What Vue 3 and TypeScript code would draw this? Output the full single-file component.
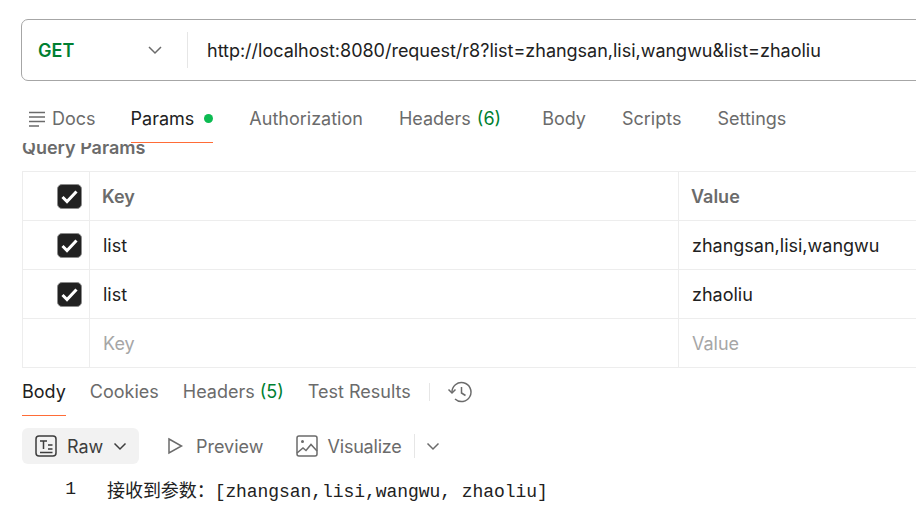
<script setup lang="ts">
const requestTabs = [
  { label: 'Authorization' },
  { label: 'Headers', count: '(6)' },
  { label: 'Body' },
  { label: 'Scripts' },
  { label: 'Settings' }
]

const params = [
  { key: 'list', value: 'zhangsan,lisi,wangwu' },
  { key: 'list', value: 'zhaoliu' }
]
</script>

<template>
  <div class="page">
    <div class="url-bar">
      <div class="method">
        <span>GET</span>
        <svg class="chevron" width="16" height="16" viewBox="0 0 16 16">
          <path d="M2 5l6 6 6-6" />
        </svg>
      </div>
      <div class="url">http://localhost:8080/request/r8?list=zhangsan,lisi,wangwu&amp;list=zhaoliu</div>
    </div>

    <div class="request-tabs">
      <div class="tab docs">
        <svg width="18" height="18" viewBox="0 0 18 18">
          <path d="M0 2.500h16M0 7h16M0 11.500h16M0 16h10" />
        </svg>
        Docs
      </div>
      <div class="tab params">
        Params
        <i class="dot"></i>
      </div>
      <div v-for="t in requestTabs" :key="t.label" class="tab" :class="`tab-${t.label.toLowerCase()}`">
        {{ t.label }}
        <span v-if="t.count" class="count">{{ t.count }}</span>
      </div>
    </div>

    <div class="params-pane">
      <div class="query-title">Query Params</div>
      <div class="table">
        <div class="row head">
          <div class="check">
            <span class="box"><svg viewBox="0 0 19 19"><path d="M2.500 10l4.500 4.500 9.500-10" /></svg></span>
          </div>
          <div class="cell key">Key</div>
          <div class="cell">Value</div>
        </div>
        <div v-for="(p, i) in params" :key="i" class="row">
          <div class="check">
            <span class="box"><svg viewBox="0 0 19 19"><path d="M2.500 10l4.500 4.500 9.500-10" /></svg></span>
          </div>
          <div class="cell key">{{ p.key }}</div>
          <div class="cell">{{ p.value }}</div>
        </div>
        <div class="row empty">
          <div class="check"></div>
          <div class="cell key">Key</div>
          <div class="cell">Value</div>
        </div>
      </div>
    </div>

    <div class="response">
      <div class="response-tabs">
        <div class="rtab active">Body</div>
        <div class="rtab">Cookies</div>
        <div class="rtab">Headers <span class="count">(5)</span></div>
        <div class="rtab">Test Results</div>
        <span class="sep"></span>
        <svg class="history" width="26" height="26" viewBox="0 0 26 26">
          <path d="M5 13.500a9.500 9.500 0 1 1 3 6.500" />
          <path d="M1.500 10.500l3.500 3.500 3.500-3.500" />
          <path d="M14.500 8v6l4 2.500" />
        </svg>
      </div>

      <div class="toolbar">
        <div class="raw">
          <svg width="22" height="22" viewBox="0 0 22 22">
            <rect x="1" y="1" width="20" height="20" rx="3" />
            <path d="M5 6h7M8.500 6v8M13 10h4.500M13 14h4.500M5 17.500h12.500" />
          </svg>
          <span>Raw</span>
          <svg class="chevron small" width="14" height="14" viewBox="0 0 14 14">
            <path d="M1.500 4.500L7 10l5.500-5.500" />
          </svg>
        </div>
        <div class="tool preview">
          <svg width="18" height="18" viewBox="0 0 18 18">
            <path d="M3 2l12.500 7L3 16z" />
          </svg>
          Preview
        </div>
        <div class="tool visualize">
          <svg width="22" height="22" viewBox="0 0 22 22">
            <rect x="1" y="1" width="20" height="20" rx="2" />
            <circle cx="6.500" cy="6.500" r="1.500" class="fill" />
            <path d="M1 18l6-5 3 2.500 5-6 6 6.500" />
          </svg>
          <span class="vis-label">Visualize</span>
          <span class="sep tall"></span>
          <svg class="chevron small" width="14" height="14" viewBox="0 0 14 14">
            <path d="M1.500 4.500L7 10l5.500-5.500" />
          </svg>
        </div>
      </div>

      <div class="code">
        <span class="line-no">1</span>
        <span class="line">接收到参数：[zhangsan,lisi,wangwu, zhaoliu]</span>
      </div>
    </div>
  </div>
</template>

<style>
html,
body {
  margin: 0;
  background: #fff;
  overflow: hidden;
}
</style>

<style scoped>
.page {
  width: 916px;
  height: 526px;
  overflow: hidden;
  padding-top: 19px;
  box-sizing: border-box;
  font-family: Inter, 'Noto Sans CJK SC', sans-serif;
  font-size: 18px;
  color: #212121;
}

svg {
  flex: none;
  fill: none;
  stroke: #6b6b6b;
  stroke-width: 1.5;
}

.url-bar {
  display: flex;
  align-items: center;
  width: 960px;
  height: 62px;
  margin-left: 21px;
  box-sizing: border-box;
  border: 1px solid #a6a6a6;
  border-radius: 7px;
}

.method {
  display: flex;
  align-items: center;
  justify-content: space-between;
  width: 166px;
  height: 36px;
  padding: 0 24px 0 16px;
  box-sizing: border-box;
  border-right: 1px solid #e6e6e6;
  color: #007f31;
  font-weight: 600;
}

.url {
  margin-left: 19px;
  white-space: nowrap;
  letter-spacing: -0.014px;
}

.request-tabs {
  display: flex;
  height: 43px;
  margin-top: 19px;
  padding-left: 29px;
  color: #6b6b6b;
}

.tab {
  display: flex;
  align-items: center;
  height: 37px;
  white-space: nowrap;
}

.docs {
  gap: 5px;
  margin-right: 35px;
}

.docs svg {
  stroke-width: 1.4;
}

.params {
  position: relative;
  color: #212121;
  margin-right: 36px;
  height: 43px;
  padding-bottom: 5px;
  box-sizing: border-box;
  border-bottom: 1px solid #ff6c37;
}

.dot {
  width: 9px;
  height: 9px;
  margin-left: 10px;
  border-radius: 50%;
  background: #0cbb52;
}

.tab-authorization {
  margin-right: 36px;
}

.tab-headers {
  margin-right: 41px;
}

.tab-body {
  margin-right: 36px;
}

.tab-scripts {
  margin-right: 36px;
}

.count {
  margin-left: 6px;
  color: #007f31;
}

.params-pane {
  height: 224px;
  overflow: hidden;
  margin-left: 22px;
  border-bottom: 1px solid #ededed;
}

.query-title {
  height: 28px;
  margin-top: -7px;
  line-height: 24px;
  font-size: 18px;
  font-weight: 600;
  color: #6b6b6b;
}

.table {
  width: 960px;
  margin-top: 7px;
  border-top: 1px solid #ededed;
  border-left: 1px solid #ededed;
}

.row {
  display: grid;
  grid-template-columns: 67px 589px 1fr;
  height: 49px;
  box-sizing: border-box;
  border-bottom: 1px solid #ededed;
}

.check {
  display: flex;
  align-items: center;
  justify-content: flex-end;
  padding-right: 7px;
  border-right: 1px solid #ededed;
}

.box {
  display: flex;
  align-items: center;
  justify-content: center;
  width: 25px;
  height: 25px;
  box-sizing: border-box;
  border: 1px solid #8c8c8c;
  border-radius: 5px;
  background: #212121;
}

.box svg {
  stroke: #fff;
  stroke-width: 3;
  width: 19px;
  height: 19px;
}

.cell {
  display: flex;
  align-items: center;
  padding-left: 13px;
  border-right: 1px solid #ededed;
}

.head .cell {
  padding-left: 12px;
  font-weight: 600;
  color: #6b6b6b;
}

.empty .cell {
  color: #a6a6a6;
}

.response-tabs {
  display: flex;
  align-items: center;
  height: 48px;
  padding-left: 22px;
  color: #6b6b6b;
}

.rtab {
  display: flex;
  align-items: center;
  height: 48px;
  margin-right: 24px;
  padding-bottom: 1px;
  box-sizing: border-box;
  white-space: pre;
}

.rtab .count {
  margin-left: 0;
}

.active {
  padding-bottom: 0;
  color: #212121;
  border-bottom: 1px solid #ff6c37;
}

.sep {
  width: 1px;
  height: 18px;
  margin-left: -6px;
  background: #e6e6e6;
}

.history {
  margin-left: 17px;
}

.toolbar {
  display: flex;
  align-items: center;
  height: 36px;
  margin-top: 12px;
  margin-left: 22px;
  color: #6b6b6b;
}

.raw {
  display: flex;
  align-items: center;
  width: 117px;
  height: 36px;
  padding-left: 13px;
  box-sizing: border-box;
  border-radius: 6px;
  background: #f2f2f2;
  color: #3d3d3d;
}

.raw svg {
  stroke: #3d3d3d;
}

.raw span {
  margin: 0 10px;
}

.tool {
  display: flex;
  align-items: center;
  white-space: nowrap;
}

.preview {
  gap: 12px;
  margin-left: 27px;
}

.visualize {
  gap: 10px;
  margin-left: 32px;
}

.vis-label {
  letter-spacing: -0.2px;
}

.fill {
  fill: #6b6b6b;
  stroke: none;
}

.sep.tall {
  height: 24px;
  margin-left: 2px;
  margin-right: 1px;
}

.code {
  display: flex;
  align-items: center;
  height: 36px;
  margin-top: 7px;
  white-space: pre;
  font-family: 'Liberation Mono', 'Noto Sans CJK SC', monospace;
  font-size: 18px;
  color: #212121;
}

.line-no {
  width: 76px;
  text-align: right;
}

.line {
  margin-left: 31px;
  letter-spacing: -0.06px;
}
</style>
